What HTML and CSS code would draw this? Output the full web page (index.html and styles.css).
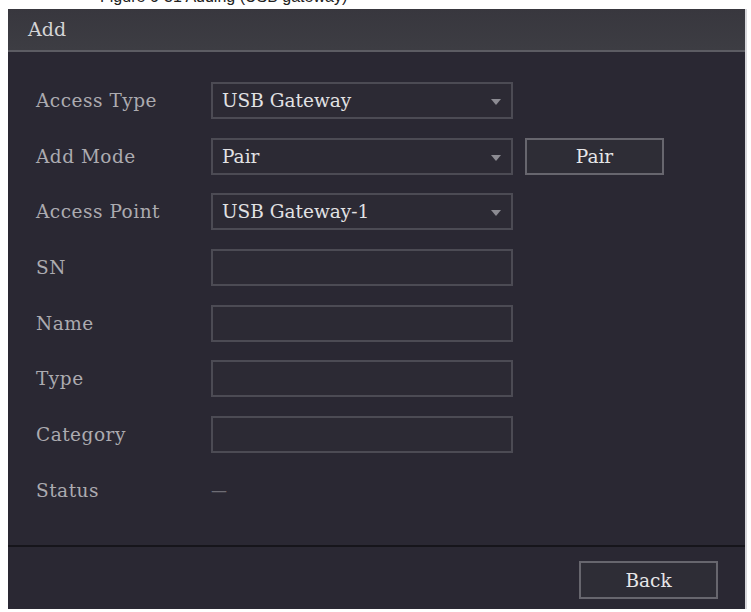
FILE: index.html
```html
<!DOCTYPE html>
<html lang="en">
<head>
  <meta charset="UTF-8" />
  <meta name="viewport" content="width=device-width, initial-scale=1" />
  <title>Add</title>
  <link rel="stylesheet" href="styles.css">
</head>
<body>

<div class="caption"><span>Figure 6-31 Adding (USB gateway)</span></div>

<div class="dialog">
  <div class="title">Add</div>

  <div class="form">
    <div class="row">
      <label>Access Type</label>
      <div class="field select">USB Gateway<i class="arrow"></i></div>
    </div>
    <div class="row">
      <label>Add Mode</label>
      <div class="field select">Pair<i class="arrow"></i></div>
      <button class="btn pair">Pair</button>
    </div>
    <div class="row">
      <label>Access Point</label>
      <div class="field select">USB Gateway-1<i class="arrow"></i></div>
    </div>
    <div class="row">
      <label>SN</label>
      <div class="field"></div>
    </div>
    <div class="row">
      <label>Name</label>
      <div class="field"></div>
    </div>
    <div class="row">
      <label>Type</label>
      <div class="field"></div>
    </div>
    <div class="row">
      <label>Category</label>
      <div class="field"></div>
    </div>
    <div class="row">
      <label>Status</label>
      <span class="status">—</span>
    </div>
  </div>

  <div class="footer">
    <button class="btn">Back</button>
  </div>
</div>

</body>
</html>
```

FILE: styles.css
```css
body {
  margin: 0;
  background: #fff;
  font-family: 'DejaVu Serif', 'Liberation Serif', serif;
}
.caption {
  height: 9px;
  overflow: hidden;
  display: flex;
  align-items: flex-end;
  padding-left: 100px;
  font-family: 'Liberation Sans', Arial, sans-serif;
  font-size: 16px;
  line-height: 17px;
  color: #222;
}
.caption span {
  margin-bottom: 4px;
}
.dialog {
  margin-left: 8px;
  width: 737px;
  height: 600px;
  background: #2a2833;
  display: flex;
  flex-direction: column;
  box-shadow: 2px 0 0 #d8d8dc;
}
.title {
  height: 41px;
  line-height: 40px;
  padding-left: 20px;
  background: linear-gradient(#38373e, #3d3d43);
  border-bottom: 2px solid #5c5c63;
  color: #d4d4d6;
  font-size: 19px;
}
.form {
  flex: 1;
  padding: 30px 0 0 28px;
  display: flex;
  flex-direction: column;
  gap: 18.7px;
}
.row {
  height: 37px;
  display: flex;
  align-items: center;
}
.row label {
  width: 175px;
  color: #acabb0;
  font-size: 18.5px;
  letter-spacing: 0.5px;
}
.field {
  box-sizing: border-box;
  width: 302px;
  height: 37px;
  border: 2px solid #4c4b54;
  background: #2c2a34;
  display: flex;
  align-items: center;
  padding-left: 9px;
  color: #e2e2e4;
  font-size: 18.5px;
}
.select {
  position: relative;
}
.arrow {
  position: absolute;
  right: 10px;
  top: 15px;
  width: 0;
  height: 0;
  border-left: 5px solid transparent;
  border-right: 5px solid transparent;
  border-top: 6px solid #8c8b92;
}
.status {
  color: #6e6d75;
  font-size: 16px;
}
.btn {
  box-sizing: border-box;
  width: 139px;
  height: 37px;
  border: 2px solid #67666e;
  background: #2e2d36;
  color: #e6e6e8;
  font-family: 'DejaVu Serif', 'Liberation Serif', serif;
  font-size: 18.5px;
  padding: 0;
}
.pair {
  margin-left: 12px;
}
.footer {
  box-sizing: border-box;
  height: 64px;
  border-top: 2px solid #16151b;
  display: flex;
  justify-content: flex-end;
  align-items: flex-start;
  padding: 14px 27px 0 0;
}
.footer .btn {
  height: 38px;
}
```
